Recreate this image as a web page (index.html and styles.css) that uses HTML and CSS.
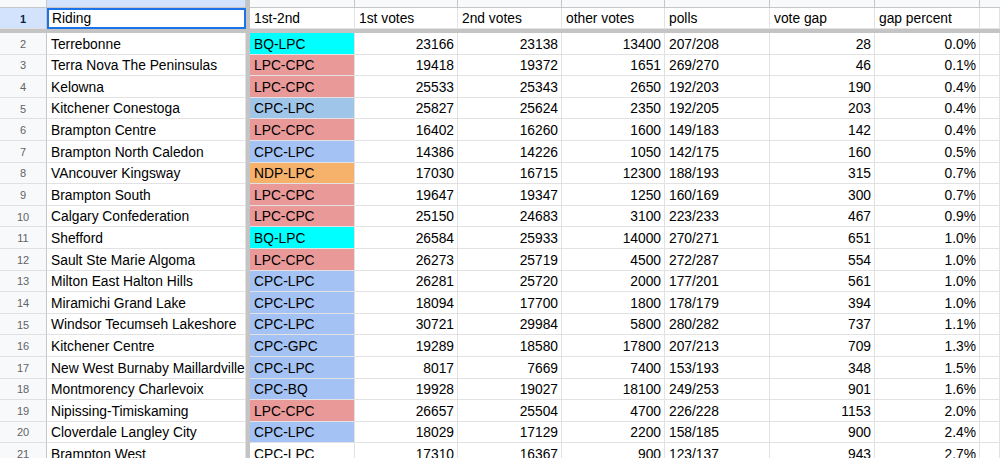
FILE: index.html
```html
<!DOCTYPE html>
<html>
<head>
<meta charset="utf-8">
<link rel="stylesheet" href="styles.css">
</head>
<body>
<div class="sheet">
  <div class="ch corner"></div><div class="ch sel"></div><div class="dv"></div><div class="ch"></div><div class="ch"></div><div class="ch"></div><div class="ch"></div><div class="ch"></div><div class="ch"></div><div class="ch"></div><div class="ch last"></div>

  <div class="rh rsel">1</div><div class="c active">Riding</div><div class="dv"></div><div class="c">1st-2nd</div><div class="c">1st votes</div><div class="c">2nd votes</div><div class="c">other votes</div><div class="c">polls</div><div class="c">vote gap</div><div class="c">gap percent</div><div class="c"></div>

  <div class="hdiv"></div>

  <div class="rh">2</div><div class="c">Terrebonne</div><div class="dv"></div><div class="c bq">BQ-LPC</div><div class="c n">23166</div><div class="c n">23138</div><div class="c n">13400</div><div class="c">207/208</div><div class="c n">28</div><div class="c n">0.0%</div><div class="c"></div>
  <div class="rh">3</div><div class="c">Terra Nova The Peninsulas</div><div class="dv"></div><div class="c lpc">LPC-CPC</div><div class="c n">19418</div><div class="c n">19372</div><div class="c n">1651</div><div class="c">269/270</div><div class="c n">46</div><div class="c n">0.1%</div><div class="c"></div>
  <div class="rh">4</div><div class="c">Kelowna</div><div class="dv"></div><div class="c lpc">LPC-CPC</div><div class="c n">25533</div><div class="c n">25343</div><div class="c n">2650</div><div class="c">192/203</div><div class="c n">190</div><div class="c n">0.4%</div><div class="c"></div>
  <div class="rh">5</div><div class="c">Kitchener Conestoga</div><div class="dv"></div><div class="c cpc2">CPC-LPC</div><div class="c n">25827</div><div class="c n">25624</div><div class="c n">2350</div><div class="c">192/205</div><div class="c n">203</div><div class="c n">0.4%</div><div class="c"></div>
  <div class="rh">6</div><div class="c">Brampton Centre</div><div class="dv"></div><div class="c lpc">LPC-CPC</div><div class="c n">16402</div><div class="c n">16260</div><div class="c n">1600</div><div class="c">149/183</div><div class="c n">142</div><div class="c n">0.4%</div><div class="c"></div>
  <div class="rh">7</div><div class="c">Brampton North Caledon</div><div class="dv"></div><div class="c cpc">CPC-LPC</div><div class="c n">14386</div><div class="c n">14226</div><div class="c n">1050</div><div class="c">142/175</div><div class="c n">160</div><div class="c n">0.5%</div><div class="c"></div>
  <div class="rh">8</div><div class="c">VAncouver Kingsway</div><div class="dv"></div><div class="c ndp">NDP-LPC</div><div class="c n">17030</div><div class="c n">16715</div><div class="c n">12300</div><div class="c">188/193</div><div class="c n">315</div><div class="c n">0.7%</div><div class="c"></div>
  <div class="rh">9</div><div class="c">Brampton South</div><div class="dv"></div><div class="c lpc">LPC-CPC</div><div class="c n">19647</div><div class="c n">19347</div><div class="c n">1250</div><div class="c">160/169</div><div class="c n">300</div><div class="c n">0.7%</div><div class="c"></div>
  <div class="rh">10</div><div class="c">Calgary Confederation</div><div class="dv"></div><div class="c lpc">LPC-CPC</div><div class="c n">25150</div><div class="c n">24683</div><div class="c n">3100</div><div class="c">223/233</div><div class="c n">467</div><div class="c n">0.9%</div><div class="c"></div>
  <div class="rh">11</div><div class="c">Shefford</div><div class="dv"></div><div class="c bq">BQ-LPC</div><div class="c n">26584</div><div class="c n">25933</div><div class="c n">14000</div><div class="c">270/271</div><div class="c n">651</div><div class="c n">1.0%</div><div class="c"></div>
  <div class="rh">12</div><div class="c">Sault Ste Marie Algoma</div><div class="dv"></div><div class="c lpc">LPC-CPC</div><div class="c n">26273</div><div class="c n">25719</div><div class="c n">4500</div><div class="c">272/287</div><div class="c n">554</div><div class="c n">1.0%</div><div class="c"></div>
  <div class="rh">13</div><div class="c">Milton East Halton Hills</div><div class="dv"></div><div class="c cpc">CPC-LPC</div><div class="c n">26281</div><div class="c n">25720</div><div class="c n">2000</div><div class="c">177/201</div><div class="c n">561</div><div class="c n">1.0%</div><div class="c"></div>
  <div class="rh">14</div><div class="c">Miramichi Grand Lake</div><div class="dv"></div><div class="c cpc">CPC-LPC</div><div class="c n">18094</div><div class="c n">17700</div><div class="c n">1800</div><div class="c">178/179</div><div class="c n">394</div><div class="c n">1.0%</div><div class="c"></div>
  <div class="rh">15</div><div class="c">Windsor Tecumseh Lakeshore</div><div class="dv"></div><div class="c cpc">CPC-LPC</div><div class="c n">30721</div><div class="c n">29984</div><div class="c n">5800</div><div class="c">280/282</div><div class="c n">737</div><div class="c n">1.1%</div><div class="c"></div>
  <div class="rh">16</div><div class="c">Kitchener Centre</div><div class="dv"></div><div class="c cpc">CPC-GPC</div><div class="c n">19289</div><div class="c n">18580</div><div class="c n">17800</div><div class="c">207/213</div><div class="c n">709</div><div class="c n">1.3%</div><div class="c"></div>
  <div class="rh">17</div><div class="c">New West Burnaby Maillardville</div><div class="dv"></div><div class="c cpc">CPC-LPC</div><div class="c n">8017</div><div class="c n">7669</div><div class="c n">7400</div><div class="c">153/193</div><div class="c n">348</div><div class="c n">1.5%</div><div class="c"></div>
  <div class="rh">18</div><div class="c">Montmorency Charlevoix</div><div class="dv"></div><div class="c cpc">CPC-BQ</div><div class="c n">19928</div><div class="c n">19027</div><div class="c n">18100</div><div class="c">249/253</div><div class="c n">901</div><div class="c n">1.6%</div><div class="c"></div>
  <div class="rh">19</div><div class="c">Nipissing-Timiskaming</div><div class="dv"></div><div class="c lpc">LPC-CPC</div><div class="c n">26657</div><div class="c n">25504</div><div class="c n">4700</div><div class="c">226/228</div><div class="c n">1153</div><div class="c n">2.0%</div><div class="c"></div>
  <div class="rh">20</div><div class="c">Cloverdale Langley City</div><div class="dv"></div><div class="c cpc">CPC-LPC</div><div class="c n">18029</div><div class="c n">17129</div><div class="c n">2200</div><div class="c">158/185</div><div class="c n">900</div><div class="c n">2.4%</div><div class="c"></div>
  <div class="rh">21</div><div class="c">Brampton West</div><div class="dv"></div><div class="c">CPC-LPC</div><div class="c n">17310</div><div class="c n">16367</div><div class="c n">900</div><div class="c">123/137</div><div class="c n">943</div><div class="c n">2.7%</div><div class="c"></div>
</div>
</body>
</html>
```

FILE: styles.css
```css
html, body {
  margin: 0;
  padding: 0;
  background: #ffffff;
  overflow: hidden;
}

.sheet {
  display: grid;
  grid-template-columns: 47px 199px 4px 105px 103px 104px 103px 105px 105px 105px 1fr;
  grid-template-rows: 8px 21px 4px repeat(20, 21.6px);
  font-family: "Liberation Sans", Arial, sans-serif;
  font-size: 13.8px;
  color: #000000;
  width: 1000px;
  height: 458px;
  overflow: hidden;
}

.ch {
  background: #f8f9fa;
  border-right: 1px solid #c4c7c5;
  border-bottom: 1px solid #c4c7c5;
  box-sizing: border-box;
}

.ch.corner {
  background: #f8f9fa;
}

.ch.sel {
  background: #d3e3fd;
}

.ch.last {
  border-right: none;
}

.dv {
  background: #c4c4c4;
}

.hdiv {
  grid-column: 1 / -1;
  background: #c4c4c4;
}

.rh {
  background: #f8f9fa;
  border-right: 1px solid #c4c7c5;
  border-bottom: 1px solid #e0e0e0;
  box-sizing: border-box;
  font-size: 11px;
  color: #5f6368;
  display: flex;
  align-items: center;
  justify-content: center;
  padding-top: 1px;
}

.rh.rsel {
  background: #d3e3fd;
  color: #0b1e3d;
  font-weight: bold;
}

.c {
  border-right: 1px solid #e2e2e2;
  border-bottom: 1px solid #e2e2e2;
  box-sizing: border-box;
  padding: 0 3px 2px 4px;
  display: flex;
  align-items: flex-end;
  white-space: nowrap;
  overflow: hidden;
}

.c.n {
  justify-content: flex-end;
}

.c.active {
  border: 2px solid #1a73e8;
  padding-left: 3px;
  padding-bottom: 1px;
}

.bq { background: #00ffff; }
.lpc { background: #ea9999; }
.cpc { background: #a4c2f4; }
.cpc2 { background: #9fc5e8; }
.ndp { background: #f6b26b; }
```
